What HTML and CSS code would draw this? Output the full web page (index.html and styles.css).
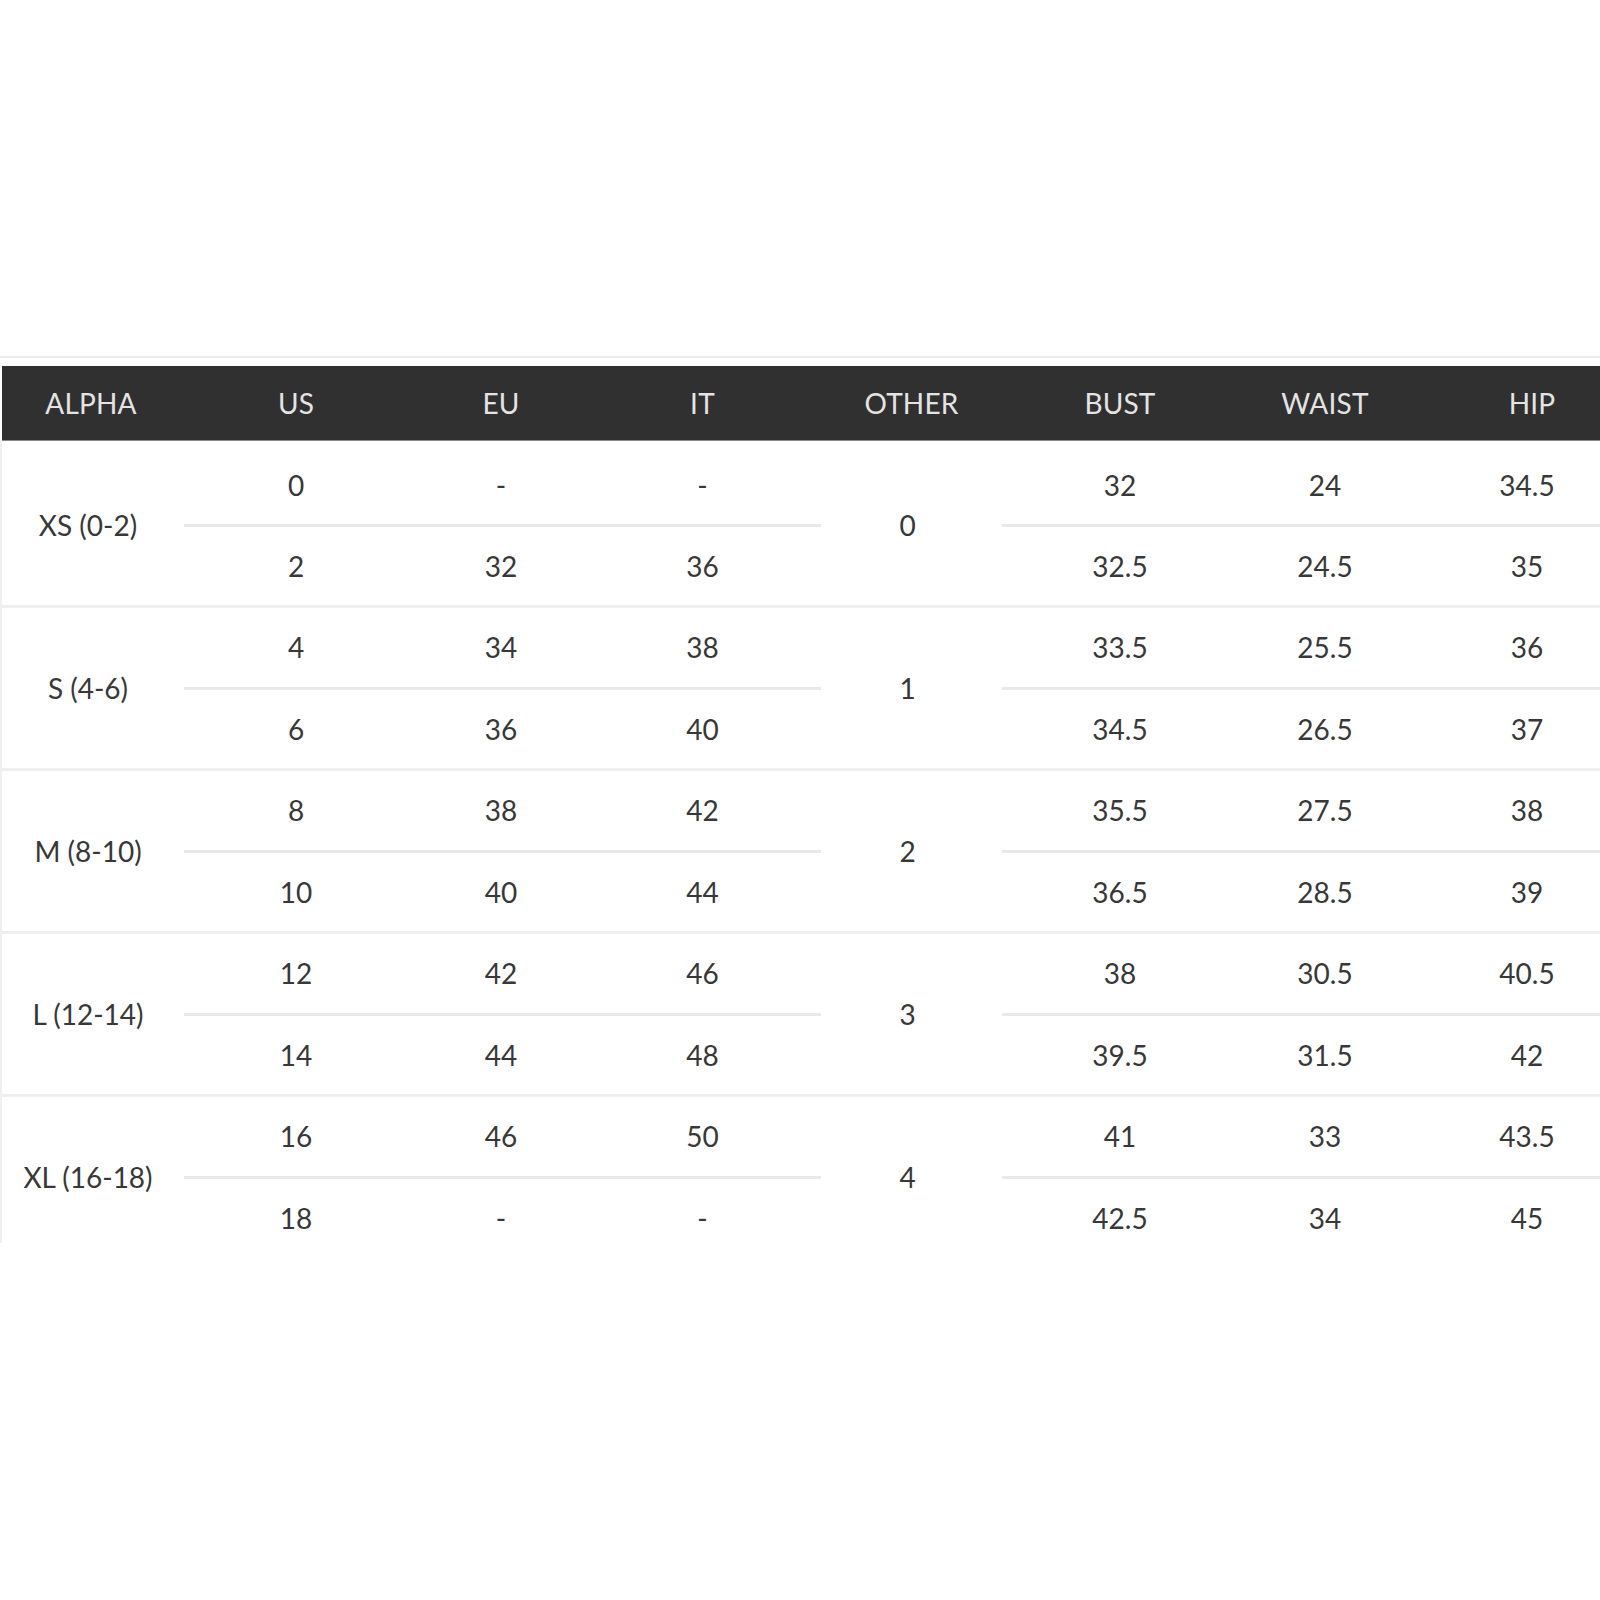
FILE: index.html
```html
<!DOCTYPE html>
<html lang="en">
<head>
<meta charset="utf-8">
<title>Size Chart</title>
<link rel="stylesheet" href="styles.css">
</head>
<body>
<div class="chart">
  <div class="head">
    <div class="hc alpha-h">ALPHA</div>
    <div class="hc">US</div>
    <div class="hc">EU</div>
    <div class="hc it">IT</div>
    <div class="hc">OTHER</div>
    <div class="hc">BUST</div>
    <div class="hc">WAIST</div>
    <div class="hc hip">HIP</div>
  </div>

  <div class="group first">
    <div class="alpha">XS (0-2)</div>
    <div class="c top">0</div><div class="c top">-</div><div class="c top it">-</div>
    <div class="other">0</div>
    <div class="c top">32</div><div class="c top">24</div><div class="c top">34.5</div>
    <div class="c">2</div><div class="c">32</div><div class="c it">36</div>
    <div class="c">32.5</div><div class="c">24.5</div><div class="c">35</div>
  </div>

  <div class="group">
    <div class="alpha">S (4-6)</div>
    <div class="c top">4</div><div class="c top">34</div><div class="c top it">38</div>
    <div class="other">1</div>
    <div class="c top">33.5</div><div class="c top">25.5</div><div class="c top">36</div>
    <div class="c">6</div><div class="c">36</div><div class="c it">40</div>
    <div class="c">34.5</div><div class="c">26.5</div><div class="c">37</div>
  </div>

  <div class="group">
    <div class="alpha">M (8-10)</div>
    <div class="c top">8</div><div class="c top">38</div><div class="c top it">42</div>
    <div class="other">2</div>
    <div class="c top">35.5</div><div class="c top">27.5</div><div class="c top">38</div>
    <div class="c">10</div><div class="c">40</div><div class="c it">44</div>
    <div class="c">36.5</div><div class="c">28.5</div><div class="c">39</div>
  </div>

  <div class="group">
    <div class="alpha">L (12-14)</div>
    <div class="c top">12</div><div class="c top">42</div><div class="c top it">46</div>
    <div class="other">3</div>
    <div class="c top">38</div><div class="c top">30.5</div><div class="c top">40.5</div>
    <div class="c">14</div><div class="c">44</div><div class="c it">48</div>
    <div class="c">39.5</div><div class="c">31.5</div><div class="c">42</div>
  </div>

  <div class="group last">
    <div class="alpha">XL (16-18)</div>
    <div class="c top">16</div><div class="c top">46</div><div class="c top it">50</div>
    <div class="other">4</div>
    <div class="c top">41</div><div class="c top">33</div><div class="c top">43.5</div>
    <div class="c">18</div><div class="c">-</div><div class="c it">-</div>
    <div class="c">42.5</div><div class="c">34</div><div class="c">45</div>
  </div>
</div>
</body>
</html>
```

FILE: styles.css
```css
html, body {
  margin: 0;
  padding: 0;
  background: #ffffff;
  overflow: hidden;
}

body {
  padding-top: 356px;
  font-family: Lato, "Open Sans", "Liberation Sans", sans-serif;
}

.chart {
  width: 1640px;
  height: 887px;
  overflow: hidden;
  border-top: 2px solid #ececec;
  padding-top: 8px;
  box-sizing: border-box;
}

.head,
.group {
  display: grid;
  grid-template-columns: 182px 224px 186px 227px 181px 236px 174px 230px;
}

.head {
  height: 74px;
  margin-left: 2px;
  background: #303030;
  color: #e4e4e4;
  font-size: 28px;
  align-items: center;
  box-shadow: 0 1px 0 #8a8a8a;
}

.hc {
  text-align: center;
  letter-spacing: 0.2px;
}

.alpha-h {
  padding-right: 4px;
}

.hip {
  padding-left: 10px;
}

.group {
  grid-template-rows: 82px 78px;
  border-bottom: 3px solid #efefef;
  border-left: 2px solid #f0f0f0;
  color: #383838;
  font-size: 28px;
}

.group.first {
  grid-template-rows: 87px 78px;
}

.alpha,
.other,
.c {
  display: flex;
  align-items: center;
  justify-content: center;
}

.alpha {
  grid-row: 1 / span 2;
  grid-column: 1;
  padding-right: 10px;
}

.other {
  grid-row: 1 / span 2;
  grid-column: 5;
  padding-right: 8px;
}

.it {
  padding-right: 10px;
}

.c.top {
  border-bottom: 3px solid #e9e9e9;
  padding-bottom: 2px;
}

.first .c.top {
  padding-bottom: 0;
  padding-top: 6px;
}

.first .alpha,
.first .other {
  padding-top: 4px;
}
```
